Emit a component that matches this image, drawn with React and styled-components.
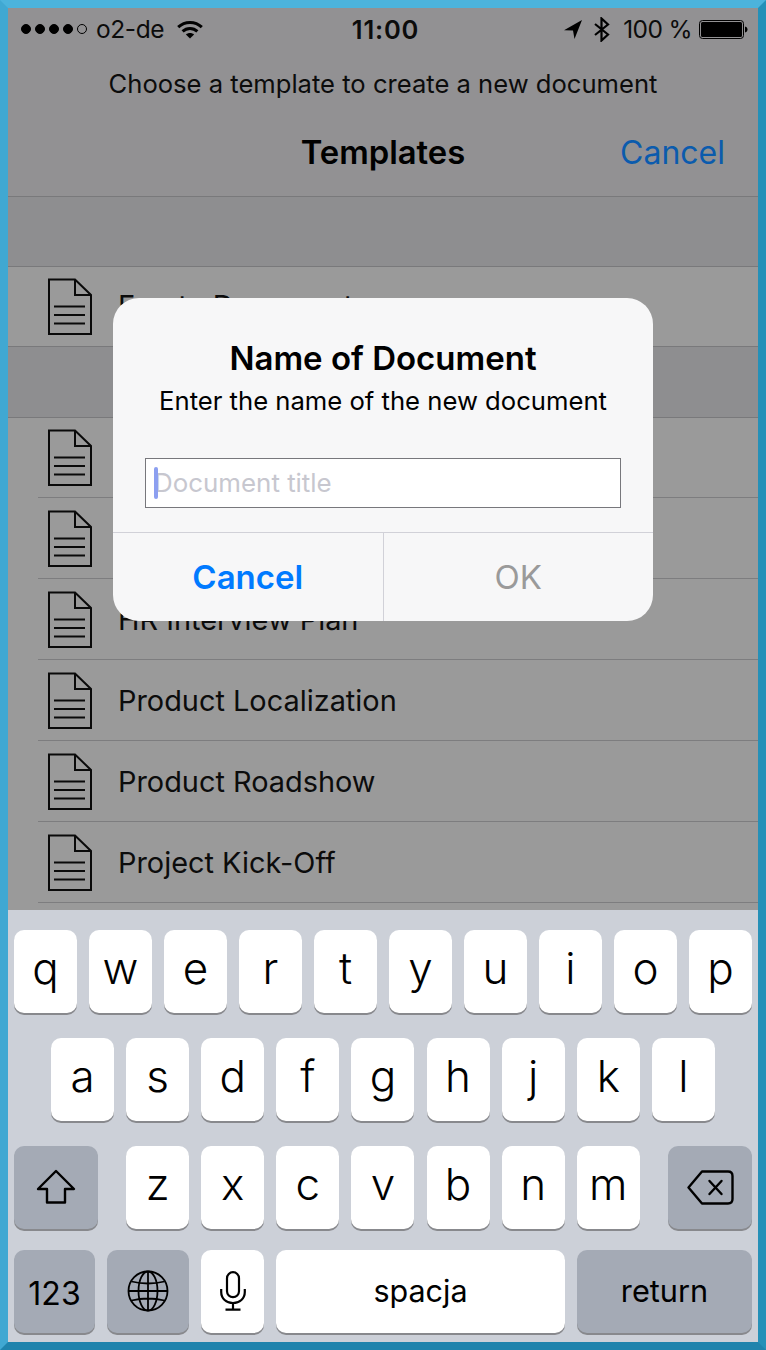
import React from "react";
import styled, { createGlobalStyle } from "styled-components";

const Global = createGlobalStyle`
  html, body { margin: 0; padding: 0; background: #fff; }
  * { box-sizing: border-box; }
`;

const Frame = styled.div`
  position: relative;
  width: 766px;
  height: 1350px;
  border-style: solid;
  border-width: 8px;
  border-color: #4cb3dc #2590b8 #1f83ac #40a8d2;
  font-family: Inter, "Liberation Sans", sans-serif;
  color: #000;
  display: flex;
  flex-direction: column;
  overflow: hidden;
`;

const Top = styled.header`
  background: #929193;
  border-bottom: 1px solid #79797b;
  flex: none;
`;

const StatusBar = styled.div`
  height: 40px;
  display: flex;
  align-items: center;
  padding: 2px 10px 0 13px;
  font-size: 24.5px;
  color: #0c0c0c;
`;
const StatusLeft = styled.div`flex: 1; display: flex; align-items: center;`;
const StatusRight = styled.div`flex: 1; display: flex; align-items: center; justify-content: flex-end;`;
const Time = styled.div`font-weight: 600; font-size: 25.5px; letter-spacing: 0.8px; padding-left: 2px;`;
const Dots = styled.div`display: flex; gap: 4px; margin-right: 9px;`;
const Dot = styled.span`
  width: 10px;
  height: 10px;
  border-radius: 50%;
  border: 1px solid #000;
  background: ${(p) => (p.$on ? "#000" : "transparent")};
`;
const Carrier = styled.span`margin-right: 13px; letter-spacing: -0.4px;`;
const Percent = styled.span`margin: 0 7px 0 13px; letter-spacing: -0.6px;`;
const StatusIcon = styled.svg`display: block; flex: none; margin-right: ${(p) => p.$mr || 0}px;`;

const Prompt = styled.div`
  height: 60px;
  padding-top: 21px;
  text-align: center;
  font-size: 25.6px;
  line-height: 30px;
  color: #0c0c0c;
`;

const Nav = styled.div`
  height: 88px;
  position: relative;
  display: flex;
  align-items: center;
  justify-content: center;
`;
const NavTitle = styled.div`font-size: 32.8px; font-weight: 600;`;
const NavCancel = styled.div`
  position: absolute;
  right: 33px;
  top: 50%;
  transform: translateY(-50%);
  font-size: 32px;
  color: #0b5bad;
`;

const List = styled.div`flex: 1; min-height: 0; overflow: hidden; background: #9a9a9a;`;
const SectionHead = styled.div`
  height: ${(p) => p.$h}px;
  background: #8e8e90;
  border-bottom: 1px solid #79797b;
`;
const Row = styled.div`
  height: ${(p) => p.$h || 81}px;
  display: flex;
`;
const RowIcon = styled.svg`margin-left: 10px; align-self: center; flex: none;`;
const RowBody = styled.div`
  flex: 1;
  margin-left: 26px;
  font-size: 28.9px;
  line-height: 82px;
  color: #0c0c0c;
  white-space: nowrap;
`;
const FullRow = styled(Row)`
  padding-left: 30px;
  border-bottom: 1px solid #79797b;
  & ${RowBody} { line-height: 78px; }
`;
const InsetRow = styled(Row)`
  border-bottom: 1px solid #7d7d7f;
  margin-left: 30px;
`;

const Keyboard = styled.div`
  flex: none;
  height: 432px;
  background: #ccd0d8;
  padding: 20px 6px 0;
`;
const KeyRow = styled.div`
  height: 84px;
  margin-bottom: ${(p) => p.$mb}px;
  padding-left: ${(p) => p.$pl || 0}px;
  display: flex;
  gap: ${(p) => p.$gap || 12}px;
`;
const Key = styled.div`
  width: ${(p) => p.$w || 63}px;
  flex: ${(p) => (p.$grow ? 1 : "none")};
  height: 83px;
  border-radius: 10px;
  background: ${(p) => (p.$dark ? "#a4aab5" : "#fff")};
  box-shadow: 0 2px 0 #88898d;
  display: flex;
  align-items: center;
  justify-content: center;
  font-size: ${(p) => p.$size || 44}px;
  font-weight: ${(p) => p.$weight || 300};
  color: #000;
  padding-top: ${(p) => p.$pt || 0}px;
  padding-bottom: ${(p) => p.$pb || 0}px;
`;
const LetterKey = styled(Key)`padding-bottom: 7px;`;
const ShiftGap = styled.div`width: 3.9px; flex: none;`;
const DeleteGap = styled.div`flex: 1;`;

const Dialog = styled.div`
  position: absolute;
  left: 105px;
  top: 290px;
  width: 540px;
  height: 323px;
  border-radius: 26px;
  background: #f7f7f8;
  display: flex;
  flex-direction: column;
`;
const DialogTitle = styled.div`
  margin-top: 41px;
  text-align: center;
  font-size: 33px;
  line-height: 38px;
  font-weight: 600;
`;
const DialogText = styled.div`
  margin-top: 7px;
  text-align: center;
  font-size: 25.65px;
  line-height: 34px;
`;
const Field = styled.div`
  position: relative;
  margin: 40px 32px 0;
  height: 50px;
`;
const Input = styled.input`
  display: block;
  width: 100%;
  height: 100%;
  border: 1px solid #77777c;
  border-radius: 0;
  background: #fff;
  padding: 0 0 2px 8px;
  font: 400 25.9px Inter, "Liberation Sans", sans-serif;
  outline: none;
  &::placeholder { color: #c7c7cf; opacity: 1; }
`;
const Caret = styled.div`
  position: absolute;
  left: 9px;
  top: 9px;
  width: 4px;
  height: 32px;
  border-radius: 2px;
  background: #8c9ff0;
`;
const Actions = styled.div`
  margin-top: 24px;
  flex: 1;
  display: flex;
  border-top: 1px solid #d1d1d8;
`;
const Action = styled.div`
  flex: 1;
  display: flex;
  align-items: center;
  justify-content: center;
  font-size: 33px;
  font-weight: ${(p) => (p.$bold ? 600 : 400)};
  color: ${(p) => (p.$muted ? "#9a9a9a" : "#007aff")};
  & + & { border-left: 1px solid #d1d1d8; }
`;

const DocIcon = () => (
  <RowIcon width="44" height="57" viewBox="0 0 44 57" fill="none" stroke="#0a0a0a" strokeWidth="2">
    <path d="M1 1.5H27L43 17V56H1Z" />
    <path d="M27 1.5V17H43" />
    <path d="M6 28.5H37M6 37H37M6 45.5H37" />
  </RowIcon>
);

const Wifi = () => (
  <StatusIcon width="26" height="19" viewBox="0 0 26 19" fill="none" stroke="#000" strokeWidth="3">
    <path d="M1.2 7.2C7.8 .8 18.2 .8 24.8 7.2" />
    <path d="M5.6 11.4C9.8 7.4 16.2 7.4 20.4 11.4" />
    <path d="M13 18.5L8.9 14.4C11.2 12.4 14.8 12.4 17.1 14.4Z" fill="#000" stroke="none" />
  </StatusIcon>
);

const Arrow = () => (
  <StatusIcon $mr={12} width="18" height="19" viewBox="0 0 18 19">
    <path d="M18 0L0 10.2L9 10.4L10.5 19Z" fill="#000" />
  </StatusIcon>
);

const Bluetooth = () => (
  <StatusIcon width="16" height="25" viewBox="0 0 16 25" fill="none" stroke="#000" strokeWidth="2.2">
    <path d="M1 7L14 17.5L7.5 23.5V1.5L14 7.5L1 18" />
  </StatusIcon>
);

const Battery = () => (
  <StatusIcon width="49" height="19" viewBox="0 0 49 19">
    <rect x=".5" y=".5" width="44" height="18" rx="3" fill="none" stroke="#000" />
    <rect x="2" y="2" width="41" height="15" rx="1.5" fill="#000" />
    <path d="M46 6.5C47.6 6.8 48.5 8 48.5 9.5S47.6 12.2 46 12.5Z" fill="#000" />
  </StatusIcon>
);

const ShiftIcon = () => (
  <svg width="40" height="36" viewBox="0 0 40 36" fill="none" stroke="#000" strokeWidth="2.4" strokeLinejoin="round">
    <path d="M20 2L38 20H29V33.5H11V20H2Z" />
  </svg>
);

const BackIcon = () => (
  <svg width="47" height="35" viewBox="0 0 47 35" fill="none" stroke="#000" strokeWidth="2.4" strokeLinejoin="round">
    <path d="M15 1.5H41Q45.5 1.5 45.5 6V29Q45.5 33.5 41 33.5H15L1.5 17.5Z" />
    <path d="M22.5 11L34.5 24M34.5 11L22.5 24" strokeLinecap="round" />
  </svg>
);

const GlobeIcon = () => (
  <svg width="42" height="42" viewBox="0 0 42 42" fill="none" stroke="#000" strokeWidth="1.8">
    <circle cx="21" cy="21" r="19.5" />
    <ellipse cx="21" cy="21" rx="9.5" ry="19.5" />
    <path d="M21 1.5V40.5M1.5 21H40.5M4.5 11.5Q21 15.5 37.5 11.5M4.5 30.5Q21 26.5 37.5 30.5" />
  </svg>
);

const MicIcon = () => (
  <svg width="26" height="40" viewBox="0 0 26 40" fill="none" stroke="#000" strokeWidth="2.2">
    <rect x="7" y="1.2" width="12" height="25" rx="6" />
    <path d="M1.2 18V21C1.2 27.5 6.3 32 13 32S24.8 27.5 24.8 21V18M13 32V38.5M5.5 38.7H20.5" />
  </svg>
);

const Letters = ({ chars }) => chars.split("").map((c) => <LetterKey key={c}>{c}</LetterKey>);

export default function App() {
  return (
    <>
      <Global />
      <Frame>
        <Top>
          <StatusBar>
            <StatusLeft>
              <Dots>
                {[1, 1, 1, 1, 0].map((on, i) => (
                  <Dot key={i} $on={!!on} />
                ))}
              </Dots>
              <Carrier>o2-de</Carrier>
              <Wifi />
            </StatusLeft>
            <Time>11:00</Time>
            <StatusRight>
              <Arrow />
              <Bluetooth />
              <Percent>100 %</Percent>
              <Battery />
            </StatusRight>
          </StatusBar>
          <Prompt>Choose a template to create a new document</Prompt>
          <Nav>
            <NavTitle>Templates</NavTitle>
            <NavCancel>Cancel</NavCancel>
          </Nav>
        </Top>
        <List>
          <SectionHead $h={70} />
          <FullRow $h={80}>
            <DocIcon />
            <RowBody>Empty Document</RowBody>
          </FullRow>
          <SectionHead $h={71} />
          <InsetRow $h={80}>
            <DocIcon />
            <RowBody />
          </InsetRow>
          <InsetRow>
            <DocIcon />
            <RowBody />
          </InsetRow>
          <InsetRow>
            <DocIcon />
            <RowBody>HR Interview Plan</RowBody>
          </InsetRow>
          <InsetRow>
            <DocIcon />
            <RowBody>Product Localization</RowBody>
          </InsetRow>
          <InsetRow>
            <DocIcon />
            <RowBody>Product Roadshow</RowBody>
          </InsetRow>
          <InsetRow>
            <DocIcon />
            <RowBody>Project Kick-Off</RowBody>
          </InsetRow>
        </List>
        <Keyboard>
          <KeyRow $mb={24}>
            <Letters chars="qwertyuiop" />
          </KeyRow>
          <KeyRow $mb={24} $pl={37} $gap={12.12}>
            <Letters chars="asdfghjkl" />
          </KeyRow>
          <KeyRow $mb={20} $gap={12.12}>
            <Key $dark $w={84} $pb={1}>
              <ShiftIcon />
            </Key>
            <ShiftGap />
            <Letters chars="zxcvbnm" />
            <DeleteGap />
            <Key $dark $w={84} $pb={1}>
              <BackIcon />
            </Key>
          </KeyRow>
          <KeyRow $mb={0}>
            <Key $dark $w={81} $size={32} $weight={400} $pt={3}>
              123
            </Key>
            <Key $dark $w={82} $pb={1}>
              <GlobeIcon />
            </Key>
            <Key $pb={1}>
              <MicIcon />
            </Key>
            <Key $grow $size={30.5} $weight={400} $pb={3}>
              spacja
            </Key>
            <Key $dark $w={175} $size={30.7} $weight={400} $pb={3}>
              return
            </Key>
          </KeyRow>
        </Keyboard>
        <Dialog>
          <DialogTitle>Name of Document</DialogTitle>
          <DialogText>Enter the name of the new document</DialogText>
          <Field>
            <Input placeholder="Document title" readOnly />
            <Caret />
          </Field>
          <Actions>
            <Action $bold>Cancel</Action>
            <Action $muted>OK</Action>
          </Actions>
        </Dialog>
      </Frame>
    </>
  );
}
